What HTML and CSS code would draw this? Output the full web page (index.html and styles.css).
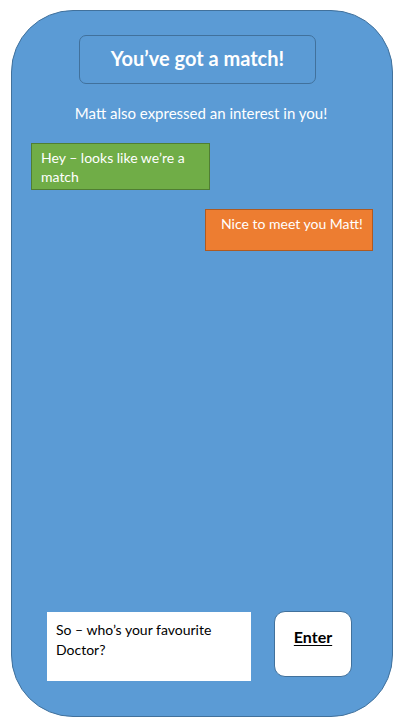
FILE: index.html
```html
<!DOCTYPE html>
<html>
<head>
<meta charset="utf-8">
<link rel="stylesheet" href="styles.css">
</head>
<body>
<div class="phone">
  <div class="title-box">You’ve got a match!</div>
  <p class="subtitle">Matt also expressed an interest in you!</p>
  <div class="msg msg-them">Hey – looks like we’re a match</div>
  <div class="msg msg-me">Nice to meet you Matt!</div>
  <div class="composer">
    <div class="input">So – who’s your favourite Doctor?</div>
    <div class="enter"><span>Enter</span></div>
  </div>
</div>
</body>
</html>
```
FILE: styles.css
```css
html, body {
  margin: 0;
  padding: 0;
  background: #ffffff;
}
body {
  font-family: Lato, "Open Sans", sans-serif;
}
.phone {
  box-sizing: border-box;
  margin: 10px 0 0 11px;
  width: 382px;
  height: 707px;
  background: #5b9bd5;
  border: 1px solid #41719c;
  border-radius: 62px;
  display: flex;
  flex-direction: column;
  align-items: flex-start;
}
.title-box {
  box-sizing: border-box;
  margin: 24px 0 0 67px;
  width: 237px;
  height: 49px;
  border: 1px solid #41719c;
  border-radius: 7px;
  color: #ffffff;
  font-weight: 700;
  font-size: 20px;
  display: flex;
  align-items: center;
  justify-content: center;
  padding-bottom: 4px;
}
.subtitle {
  align-self: stretch;
  margin: 19px 0 0 0;
  padding-right: 2px;
  text-align: center;
  color: #ffffff;
  font-size: 15px;
  line-height: 20px;
}
.msg {
  box-sizing: border-box;
  color: #ffffff;
  font-size: 14px;
  line-height: 19px;
}
.msg-them {
  margin: 20px 0 0 19px;
  width: 179px;
  height: 47px;
  background: #70ad47;
  border: 1px solid #507e32;
  padding: 4px 8px 0 9px;
}
.msg-me {
  margin: 19px 0 0 193px;
  width: 168px;
  height: 42px;
  background: #ed7d31;
  border: 1px solid #ae5a21;
  padding: 4px 8px 0 15px;
}
.composer {
  margin: auto 0 35px 35px;
  display: flex;
  align-items: flex-start;
  gap: 23px;
}
.input {
  box-sizing: border-box;
  margin-top: 1px;
  width: 204px;
  height: 69px;
  background: #ffffff;
  color: #000000;
  font-size: 14px;
  line-height: 20px;
  padding: 8px 20px 0 9px;
}
.enter {
  box-sizing: border-box;
  width: 78px;
  height: 66px;
  background: #ffffff;
  border: 1px solid #41719c;
  border-radius: 11px;
  display: flex;
  justify-content: center;
  padding-top: 15px;
  font-size: 16px;
  font-weight: 700;
  color: #000000;
}
.enter span {
  text-decoration: underline;
  text-underline-offset: 2px;
}
```
